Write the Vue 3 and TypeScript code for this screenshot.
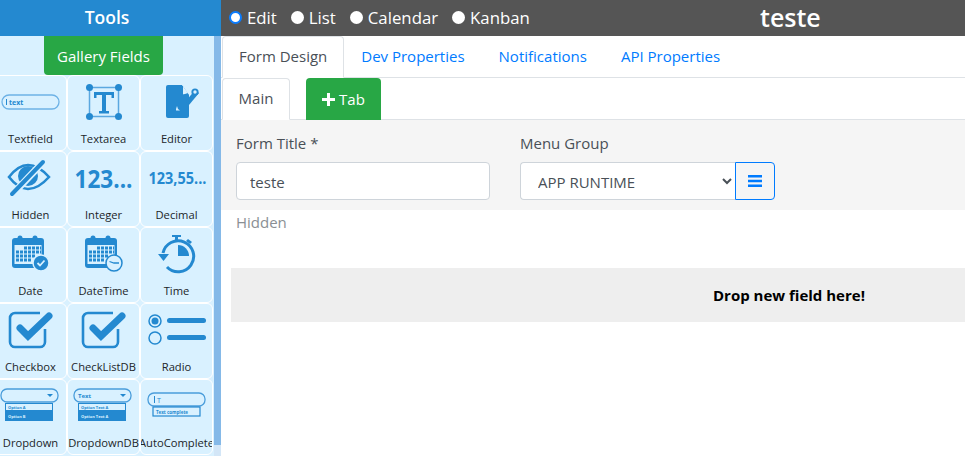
<template>
  <div class="app">
    <aside class="tools">
      <header class="tools-head">Tools</header>
      <div class="tools-scroll">
        <div class="tools-body">
          <div class="gallery-row">
            <button type="button" class="gallery-btn">Gallery Fields</button>
          </div>
          <div class="tool-grid">
            <div v-for="tool in tools" :key="tool" class="tool">
              <div class="tool-icon">
                <svg v-if="tool === 'Textfield'" width="60" height="18" viewBox="0 0 60 18">
                  <rect x="1" y="2" width="57" height="14" rx="7" fill="none" stroke="#6db2e6" stroke-width="1.3" />
                  <rect x="5" y="6" width="1" height="6" fill="#2489d0" />
                  <text x="8" y="12" class="mini" font-size="7" font-weight="700">text</text>
                </svg>
                <svg v-else-if="tool === 'Textarea'" width="40" height="40" viewBox="0 0 40 40">
                  <rect x="5.5" y="5.5" width="29" height="29" fill="none" stroke="#5ba8e0" stroke-width="1.5" />
                  <circle cx="5.5" cy="5.5" r="3.5" fill="#2489d0" />
                  <circle cx="34.5" cy="5.5" r="3.5" fill="#2489d0" />
                  <circle cx="5.5" cy="34.5" r="3.5" fill="#2489d0" />
                  <circle cx="34.5" cy="34.5" r="3.5" fill="#2489d0" />
                  <path d="M10 16v-6h20v6h-2.500v-3h-5.500v16h3v2.500h-10v-2.500h3v-16h-5.500v3z" fill="#2489d0" />
                </svg>
                <svg v-else-if="tool === 'Editor'" class="editor-icon" width="34" height="34" viewBox="0 0 34 34">
                  <path d="M2 0h14l7 10v21a2 2 0 0 1-2 2H2a2 2 0 0 1-2-2V2a2 2 0 0 1 2-2z" fill="#2489d0" />
                  <path d="M16 0l6 8-6 2z" fill="#d9f1ff" />
                  <path d="M16.500 1v9h6" fill="none" stroke="#2489d0" stroke-width="1" />
                  <path d="M20 16l9-11 4 3-10 12z" fill="#2489d0" />
                  <circle cx="29" cy="7" r="3.600" fill="#2489d0" />
                  <circle cx="29" cy="7" r="1.700" fill="#d9f1ff" />
                  <path d="M10 24l1-3 1 3 2 1.500h-4z" fill="#d9f1ff" />
                </svg>
                <svg v-else-if="tool === 'Hidden'" class="hidden-icon" width="44" height="40" viewBox="0 0 44 40">
                  <path d="M2 19C9 10 15 7 21 7s13 3 21 12c-8 9-15 12-21 12S9 28 2 19z" fill="none" stroke="#2489d0" stroke-width="2.600" />
                  <circle cx="21" cy="18" r="10" fill="#2489d0" />
                  <path d="M4 38L37 3" stroke="#d9f1ff" stroke-width="7" />
                  <path d="M5 36L36 4" stroke="#2489d0" stroke-width="4" stroke-linecap="round" />
                </svg>
                <svg v-else-if="tool === 'Integer'" width="70" height="32" viewBox="0 0 70 32">
                  <text x="5.500" y="26" class="num" font-size="25" font-weight="700" textLength="58" lengthAdjust="spacingAndGlyphs">123...</text>
                </svg>
                <svg v-else-if="tool === 'Decimal'" width="70" height="32" viewBox="0 0 70 32">
                  <text x="6.500" y="22" class="num" font-size="15.500" font-weight="700" textLength="58" lengthAdjust="spacingAndGlyphs">123,55...</text>
                </svg>
                <svg v-else-if="tool === 'Date' || tool === 'DateTime'" width="38" height="38" viewBox="0 0 38 38">
                  <path d="M3 3h26a3 3 0 0 1 3 3v24a3 3 0 0 1-3 3H3a3 3 0 0 1-3-3V6a3 3 0 0 1 3-3z" fill="#2489d0" />
                  <circle cx="8" cy="3" r="2.500" fill="#2489d0" />
                  <circle cx="23" cy="3" r="2.500" fill="#2489d0" />
                  <rect x="2.500" y="10" width="27" height="19" fill="#d9f1ff" />
                  <path d="M12 13h17M4 17h25M4 21h20M4 25h16" fill="none" stroke="#2489d0" stroke-width="3" stroke-dasharray="3 1" />
                  <circle cx="29" cy="28" r="8" :fill="tool === 'Date' ? '#2489d0' : '#d9f1ff'" :stroke="tool === 'Date' ? '#d9f1ff' : '#2489d0'" stroke-width="1.500" />
                  <path v-if="tool === 'Date'" d="M25.500 28l2.500 2.500 4.500-5" fill="none" stroke="#d9f1ff" stroke-width="1.800" />
                  <path v-else d="M24.500 26.500l4.500 1.500h5" fill="none" stroke="#2489d0" stroke-width="1.300" />
                </svg>
                <svg v-else-if="tool === 'Time'" width="38" height="40" viewBox="0 0 38 40">
                  <path d="M14 1h9v2h-3v3h-3V3h-3z" fill="#2489d0" />
                  <path d="M30 5l4 3-2 2-4-3z" fill="#2489d0" />
                  <path d="M4 17A15.500 15.500 0 1 1 8 31" fill="none" stroke="#2489d0" stroke-width="3" transform="translate(1 2)" />
                  <path d="M0 20h11l-5.500 7z" fill="#2489d0" />
                  <path d="M20 11a11 11 0 0 1 11 11H20z" fill="#2489d0" />
                </svg>
                <svg v-else-if="tool === 'Checkbox' || tool === 'CheckListDB'" width="46" height="38" viewBox="0 0 46 38">
                  <path d="M32 2H7a5 5 0 0 0-5 5v24a5 5 0 0 0 5 5h25a5 5 0 0 0 5-5V18" fill="none" stroke="#2489d0" stroke-width="2.600" />
                  <path d="M12 17l8 8L41 5" fill="none" stroke="#2489d0" stroke-width="7" stroke-linecap="round" />
                </svg>
                <svg v-else-if="tool === 'Radio'" width="60" height="34" viewBox="0 0 60 34">
                  <circle cx="8" cy="8" r="6" fill="none" stroke="#2489d0" stroke-width="1.500" />
                  <circle cx="8" cy="8" r="3.500" fill="#2489d0" />
                  <circle cx="8" cy="25" r="6" fill="none" stroke="#2489d0" stroke-width="1.500" />
                  <rect x="20" y="5" width="39" height="5" rx="2.500" fill="#2489d0" />
                  <rect x="20" y="22" width="39" height="5" rx="2.500" fill="#2489d0" />
                </svg>
                <svg v-else-if="tool === 'Dropdown' || tool === 'DropdownDB'" width="62" height="36" viewBox="0 0 62 36">
                  <rect x="1" y="1" width="57" height="13" rx="6" fill="none" stroke="#4a9ddb" stroke-width="1.300" />
                  <path d="M47 6h6l-3 3z" fill="#2489d0" />
                  <text v-if="tool === 'DropdownDB'" x="5" y="10" class="mini" font-size="6" font-weight="700">Text</text>
                  <rect x="5.500" y="15.500" width="47" height="7" fill="#d9f1ff" stroke="#2489d0" />
                  <rect x="5" y="23" width="48" height="10" fill="#2489d0" />
                  <text x="8" y="21" class="mini" font-size="4" font-weight="700">{{ tool === 'Dropdown' ? 'Option A' : 'Option Text A' }}</text>
                  <text x="8" y="30" class="mini-light" font-size="4" font-weight="700">{{ tool === 'Dropdown' ? 'Option B' : 'Option Text A' }}</text>
                </svg>
                <svg v-else width="60" height="30" viewBox="0 0 60 30">
                  <rect x="1" y="2" width="57" height="13" rx="6" fill="none" stroke="#4a9ddb" stroke-width="1.300" />
                  <rect x="7" y="5" width="1" height="7" fill="#2489d0" />
                  <text x="10" y="12" class="mini" font-size="7">T</text>
                  <rect x="6" y="16" width="47" height="9" fill="none" stroke="#2489d0" stroke-width="1.200" />
                  <text x="9" y="23" class="mini" font-size="4.500" font-weight="700">Text complete</text>
                </svg>
              </div>
              <span class="tool-name">{{ tool }}</span>
            </div>
          </div>
        </div>
        <div class="scrollbar"><div class="scrollbar-thumb"></div></div>
      </div>
    </aside>

    <main class="main">
      <nav class="topbar">
        <div class="modes">
          <span v-for="mode in modes" :key="mode" class="mode">
            <i class="radio" :class="{ 'radio--on': mode === 'Edit' }"></i>{{ mode }}
          </span>
        </div>
        <strong class="app-name">teste</strong>
      </nav>

      <ul class="tabs tabs--top">
        <li v-for="(tab, i) in pageTabs" :key="tab" class="tab" :class="{ 'tab--active': i === 0 }">{{ tab }}</li>
      </ul>

      <ul class="tabs tabs--sub">
        <li class="tab tab--active">Main</li>
        <li class="add-tab">
          <svg width="13" height="13" viewBox="0 0 13 13"><path d="M5 0h3v5h5v3H8v5H5V8H0V5h5z" fill="#fff" /></svg>
          Tab
        </li>
      </ul>

      <section class="form-head">
        <div class="field field--title">
          <label>Form Title *</label>
          <input type="text" value="teste" />
        </div>
        <div class="field">
          <label>Menu Group</label>
          <div class="select-group">
            <select>
              <option>APP RUNTIME</option>
            </select>
            <button type="button" class="menu-btn">
              <svg width="14" height="12" viewBox="0 0 14 12"><path d="M0 0h14v2.400H0zM0 4.800h14v2.400H0zM0 9.600h14V12H0z" fill="#007bff" /></svg>
            </button>
          </div>
        </div>
      </section>

      <div class="hidden-label">Hidden</div>
      <div class="dropzone">Drop new field here!</div>
    </main>
  </div>
</template>

<script setup lang="ts">
const tools: string[] = [
  'Textfield', 'Textarea', 'Editor',
  'Hidden', 'Integer', 'Decimal',
  'Date', 'DateTime', 'Time',
  'Checkbox', 'CheckListDB', 'Radio',
  'Dropdown', 'DropdownDB', 'AutoComplete',
];
const modes: string[] = ['Edit', 'List', 'Calendar', 'Kanban'];
const pageTabs: string[] = ['Form Design', 'Dev Properties', 'Notifications', 'API Properties'];
</script>

<style>
html, body {
  margin: 0;
  overflow: hidden;
  background: #fff;
}
</style>

<style scoped>
.app {
  display: flex;
  width: 965px;
  height: 456px;
  overflow: hidden;
  font-family: "Open Sans", "Noto Sans", sans-serif;
  font-size: 15px;
  color: #495057;
}

.tools {
  width: 221px;
  flex: none;
  display: flex;
  flex-direction: column;
}

.tools-head {
  height: 36px;
  flex: none;
  padding-right: 7px;
  background: #2489d0;
  color: #fff;
  font-size: 17.5px;
  font-weight: 600;
  line-height: 34px;
  text-align: center;
}

.tools-scroll {
  flex: 1;
  display: flex;
  min-height: 0;
}

.tools-body {
  width: 214px;
  background: #d9f1ff;
  overflow: hidden;
}

.scrollbar {
  width: 7px;
  background: #d3e6f7;
}

.scrollbar-thumb {
  height: 409px;
  background: #85b9e8;
}

.gallery-row {
  height: 39px;
  display: flex;
  justify-content: center;
  padding-right: 7px;
}

.gallery-btn {
  width: 119px;
  height: 39px;
  padding: 0;
  border: none;
  border-radius: 0 0 4px 4px;
  background: #28a745;
  color: #fff;
  font: 15px "Open Sans", sans-serif;
}

.tool-grid {
  display: grid;
  grid-template-columns: 73px 73px 73px;
  grid-auto-rows: 76px;
  margin-left: -6px;
}

.tool {
  box-sizing: border-box;
  border: 1px solid #fff;
  border-radius: 6px;
  display: flex;
  flex-direction: column;
  align-items: center;
  overflow: hidden;
}

.tool-icon {
  height: 52px;
  width: 100%;
  flex: none;
  display: flex;
  align-items: center;
  justify-content: center;
}

.editor-icon {
  margin-left: 13px;
}

.hidden-icon {
  margin-right: 3px;
}

.tool-name {
  margin-top: 3px;
  font-size: 11.2px;
  line-height: 16px;
  color: #212529;
  white-space: nowrap;
}

.mini {
  fill: #2489d0;
  font-family: "Open Sans", sans-serif;
}

.mini-light {
  fill: #d9f1ff;
  font-family: "Open Sans", sans-serif;
}

.num {
  fill: #2489d0;
  font-family: "Open Sans", sans-serif;
}

.main {
  flex: 1;
  min-width: 0;
}

.topbar {
  height: 36px;
  padding-bottom: 2px;
  box-sizing: border-box;
  background: #555;
  color: #fff;
  display: flex;
  align-items: center;
  padding-left: 8px;
  font-size: 16.8px;
}

.modes {
  display: flex;
  gap: 14px;
  width: 531px;
}

.mode {
  display: inline-flex;
  align-items: center;
  gap: 5px;
}

.radio {
  width: 13px;
  height: 13px;
  border-radius: 50%;
  background: #fff;
  box-sizing: border-box;
}

.radio--on {
  border: 2px solid #0a7cff;
}

.app-name {
  font-size: 25px;
  font-weight: 600;
}

.tabs {
  display: flex;
  list-style: none;
  margin: 0;
  padding: 0 0 0 1px;
  height: 42px;
  box-sizing: border-box;
  border-bottom: 1px solid #dee2e6;
}

.tab {
  height: 42px;
  box-sizing: border-box;
  padding: 0 16px;
  line-height: 38px;
  color: #007bff;
  white-space: nowrap;
  border: 1px solid transparent;
  border-radius: 4px 4px 0 0;
}

.tab--active {
  color: #495057;
  background: #fff;
  border-color: #dee2e6 #dee2e6 #fff;
}

.tabs--sub .tab {
  width: 68px;
  padding: 0;
  text-align: center;
  margin-right: 16px;
}

.add-tab {
  width: 75px;
  height: 42px;
  background: #28a745;
  color: #fff;
  border-radius: 4px 4px 0 0;
  display: flex;
  align-items: center;
  justify-content: center;
  gap: 4px;
}

.form-head {
  height: 90px;
  background: #f5f5f5;
  display: flex;
  gap: 30px;
  padding: 12px 0 0 15px;
  box-sizing: border-box;
}

.field label {
  display: block;
  height: 30px;
  line-height: 22px;
}

.field--title input {
  width: 254px;
}

input,
select {
  height: 38px;
  box-sizing: border-box;
  border: 1px solid #ced4da;
  border-radius: 4px;
  background: #fff;
  color: #495057;
  font: 15px "Open Sans", sans-serif;
  padding: 2px 12px 0 13px;
  display: block;
  margin: 0;
}

.select-group {
  display: flex;
}

select {
  width: 215px;
  border-right: none;
  border-radius: 4px 0 0 4px;
}

.menu-btn {
  width: 40px;
  height: 38px;
  padding: 0;
  background: transparent;
  border: 1px solid #007bff;
  border-radius: 0 4px 4px 0;
  display: flex;
  align-items: center;
  justify-content: center;
}

.hidden-label {
  height: 58px;
  padding: 1px 0 0 15px;
  box-sizing: border-box;
  line-height: 22px;
  color: #8a8f94;
}

.dropzone {
  height: 54px;
  margin-left: 10px;
  padding-left: 482px;
  background: #eee;
  color: #000;
  font-size: 15px;
  font-weight: 700;
  line-height: 54px;
}
</style>
